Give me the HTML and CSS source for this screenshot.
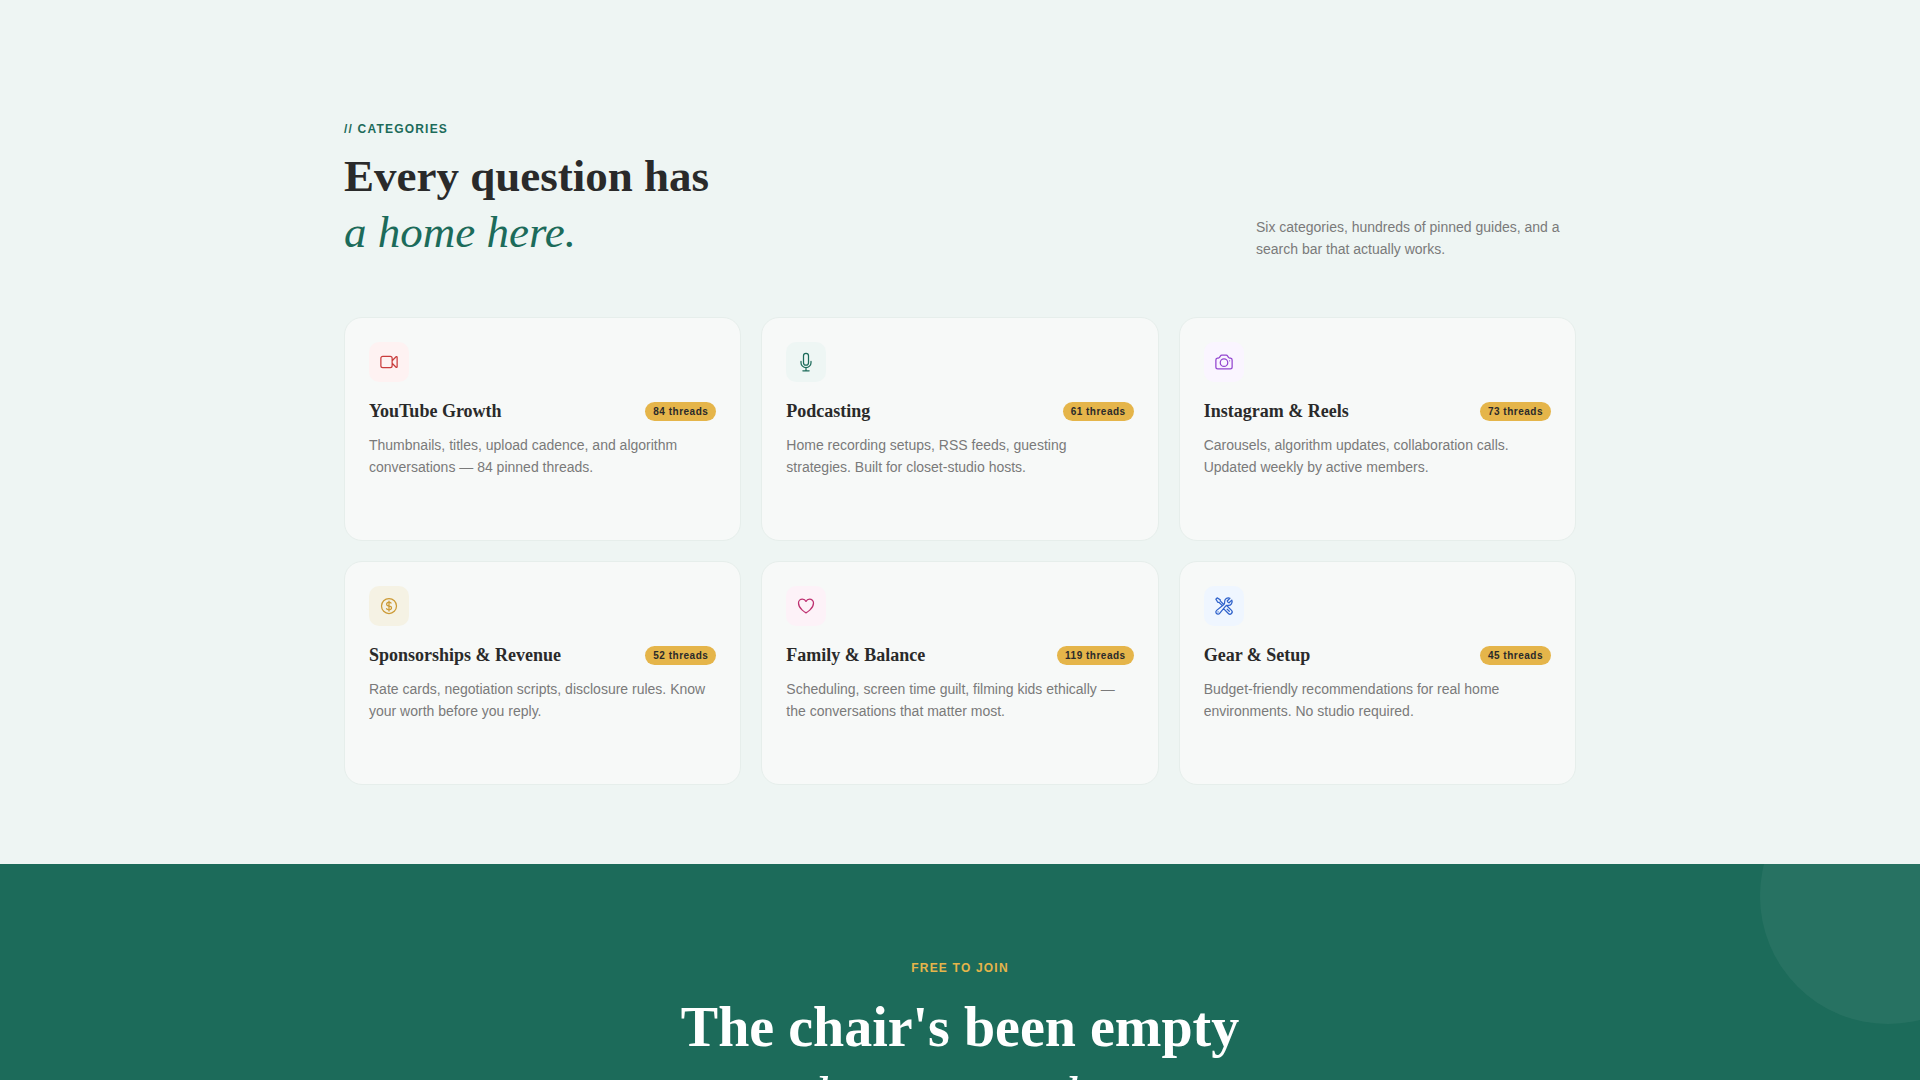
FILE: index.html
```
<!DOCTYPE html>
<html lang="en">
<head>
  <meta charset="UTF-8">
  <meta name="viewport" content="width=device-width, initial-scale=1.0">
  <title>Community Categories</title>
  <link rel="stylesheet" href="styles.css">
</head>
<body>
  <section class="categories">
    <div class="container">
      <div class="section-head">
        <div>
          <p class="eyebrow">// Categories</p>
          <h2>Every question has<br><em>a home here.</em></h2>
        </div>
        <p class="lede">Six categories, hundreds of pinned guides, and a search bar that actually works.</p>
      </div>

      <div class="grid">
        <article class="card">
          <div class="icon icon-red">
            <svg viewBox="0 0 24 24"><path d="m15.75 10.5 4.72-4.72a.75.75 0 0 1 1.28.53v11.38a.75.75 0 0 1-1.28.53l-4.72-4.72M4.5 18.75h9a2.25 2.25 0 0 0 2.25-2.25v-9a2.25 2.25 0 0 0-2.25-2.25h-9A2.25 2.25 0 0 0 2.25 7.5v9a2.25 2.25 0 0 0 2.25 2.25Z"/></svg>
          </div>
          <div class="card-title">
            <h3>YouTube Growth</h3>
            <span class="badge">84 threads</span>
          </div>
          <p>Thumbnails, titles, upload cadence, and algorithm conversations — 84 pinned threads.</p>
        </article>

        <article class="card">
          <div class="icon icon-green">
            <svg viewBox="0 0 24 24"><path d="M12 18.75a6 6 0 0 0 6-6v-1.5m-6 7.5a6 6 0 0 1-6-6v-1.5m6 7.5v3.75m-3.75 0h7.5M12 15.75a3 3 0 0 1-3-3V4.5a3 3 0 1 1 6 0v8.25a3 3 0 0 1-3 3Z"/></svg>
          </div>
          <div class="card-title">
            <h3>Podcasting</h3>
            <span class="badge">61 threads</span>
          </div>
          <p>Home recording setups, RSS feeds, guesting strategies. Built for closet-studio hosts.</p>
        </article>

        <article class="card">
          <div class="icon icon-purple">
            <svg viewBox="0 0 24 24"><path d="M6.827 6.175A2.31 2.31 0 0 1 5.186 7.23c-.38.054-.757.112-1.134.175C2.999 7.58 2.25 8.507 2.25 9.574V18a2.25 2.25 0 0 0 2.25 2.25h15A2.25 2.25 0 0 0 21.75 18V9.574c0-1.067-.75-1.994-1.802-2.169a47.865 47.865 0 0 0-1.134-.175 2.31 2.31 0 0 1-1.64-1.055l-.822-1.316a2.192 2.192 0 0 0-1.736-1.039 48.774 48.774 0 0 0-5.232 0 2.192 2.192 0 0 0-1.736 1.039l-.821 1.316Z"/><path d="M16.5 12.75a4.5 4.5 0 1 1-9 0 4.5 4.5 0 0 1 9 0ZM18.75 10.5h.008v.008h-.008V10.5Z"/></svg>
          </div>
          <div class="card-title">
            <h3>Instagram &amp; Reels</h3>
            <span class="badge">73 threads</span>
          </div>
          <p>Carousels, algorithm updates, collaboration calls. Updated weekly by active members.</p>
        </article>

        <article class="card">
          <div class="icon icon-gold">
            <svg viewBox="0 0 24 24"><path d="M12 6v12m-3-2.818.879.659c1.171.879 3.07.879 4.242 0 1.172-.879 1.172-2.303 0-3.182C13.536 12.219 12.768 12 12 12c-.725 0-1.45-.22-2.003-.659-1.106-.879-1.106-2.303 0-3.182s2.9-.879 4.006 0l.415.33M21 12a9 9 0 1 1-18 0 9 9 0 0 1 18 0Z"/></svg>
          </div>
          <div class="card-title">
            <h3>Sponsorships &amp; Revenue</h3>
            <span class="badge">52 threads</span>
          </div>
          <p>Rate cards, negotiation scripts, disclosure rules. Know your worth before you reply.</p>
        </article>

        <article class="card">
          <div class="icon icon-pink">
            <svg viewBox="0 0 24 24"><path d="M21 8.25c0-2.485-2.099-4.5-4.688-4.5-1.935 0-3.597 1.126-4.312 2.733-.715-1.607-2.377-2.733-4.313-2.733C5.1 3.75 3 5.765 3 8.25c0 7.22 9 12 9 12s9-4.78 9-12Z"/></svg>
          </div>
          <div class="card-title">
            <h3>Family &amp; Balance</h3>
            <span class="badge">119 threads</span>
          </div>
          <p>Scheduling, screen time guilt, filming kids ethically — the conversations that matter most.</p>
        </article>

        <article class="card">
          <div class="icon icon-blue">
            <svg viewBox="0 0 24 24"><path d="M11.42 15.17 17.25 21A2.652 2.652 0 0 0 21 17.25l-5.877-5.877M11.42 15.17l2.496-3.03c.317-.384.74-.626 1.208-.766M11.42 15.17l-4.655 5.653a2.548 2.548 0 1 1-3.586-3.586l6.837-5.63m5.108-.233c.55-.164 1.163-.188 1.743-.14a4.5 4.5 0 0 0 4.486-6.336l-3.276 3.277a3.004 3.004 0 0 1-2.25-2.25l3.276-3.276a4.5 4.5 0 0 0-6.336 4.486c.091 1.076-.071 2.264-.904 2.95l-.102.085m-1.745 1.437L5.909 7.5H4.5L2.25 3.75l1.5-1.5L7.5 4.5v1.409l4.26 4.26m-1.745 1.437 1.745-1.437m6.615 8.206L15.75 15.75M4.867 19.125h.008v.008h-.008v-.008Z"/></svg>
          </div>
          <div class="card-title">
            <h3>Gear &amp; Setup</h3>
            <span class="badge">45 threads</span>
          </div>
          <p>Budget-friendly recommendations for real home environments. No studio required.</p>
        </article>
      </div>
    </div>
  </section>

  <section class="cta">
    <div class="container">
      <p class="eyebrow">Free to join</p>
      <h2>The chair's been empty<br><em>long enough.</em></h2>
    </div>
  </section>
</body>
</html>
```
FILE: styles.css
```
* { box-sizing: border-box; margin: 0; padding: 0; }
body {
  font-family: "Liberation Sans", Arial, sans-serif;
  background-color: #eef5f3;
  color: #2a2a2a;
  overflow-x: hidden;
}
.container {
  max-width: 1280px;
  margin: 0 auto;
  padding: 0 24px;
}
.categories {
  padding: 120px 0 79px;
}
.section-head {
  display: flex;
  justify-content: space-between;
  align-items: flex-end;
  gap: 24px;
  margin-bottom: 57px;
}
.eyebrow {
  font-size: 12px;
  line-height: 18px;
  font-weight: 700;
  letter-spacing: 0.1em;
  text-transform: uppercase;
  color: #1c6b5a;
  margin-bottom: 10px;
}
h2 {
  font-family: "Liberation Serif", "Times New Roman", serif;
  font-size: 45px;
  line-height: 56px;
  font-weight: 700;
}
h2 em {
  font-weight: 400;
  color: #1c6b5a;
}
.lede {
  max-width: 320px;
  font-size: 14px;
  line-height: 22px;
  color: #7a7a7a;
}
.grid {
  display: grid;
  grid-template-columns: repeat(3, 1fr);
  gap: 20px;
}
.card {
  min-height: 224px;
  padding: 24px;
  background-color: #f7f9f8;
  border: 1px solid #e6eeeb;
  border-radius: 18px;
}
.icon {
  display: flex;
  align-items: center;
  justify-content: center;
  width: 40px;
  height: 40px;
  margin-bottom: 19px;
  border-radius: 10px;
}
.icon svg {
  width: 20px;
  height: 20px;
  fill: none;
  stroke: currentColor;
  stroke-width: 1.5;
  stroke-linecap: round;
  stroke-linejoin: round;
}
.icon-red { background-color: #fef2f2; color: #c93c3c; }
.icon-green { background-color: #eef6f4; color: #1c6b5a; }
.icon-purple { background-color: #faf5ff; color: #9345d0; }
.icon-gold { background-color: #f5f2e4; color: #cc9a35; }
.icon-pink { background-color: #fdf2f8; color: #be3070; }
.icon-blue { background-color: #eff6ff; color: #2f62cb; }
.card-title {
  display: flex;
  align-items: center;
  justify-content: space-between;
  margin-bottom: 12px;
}
h3 {
  font-family: "Liberation Serif", "Times New Roman", serif;
  font-size: 18px;
  line-height: 21px;
  font-weight: 700;
}
.badge {
  padding: 3px 8px;
  font-size: 10px;
  line-height: 13px;
  font-weight: 700;
  letter-spacing: 0.5px;
  background-color: #e5b54a;
  border-radius: 20px;
}
.card p {
  font-size: 14px;
  line-height: 22px;
  color: #7a7a7a;
}
.cta {
  position: relative;
  overflow: hidden;
  padding: 95px 0;
  background-color: #1c6b5a;
  color: white;
  text-align: center;
}
/* pale disc in the top right corner */
.cta::before {
  content: "";
  position: absolute;
  top: -96px;
  right: -96px;
  width: 256px;
  height: 256px;
  border-radius: 50%;
  background-color: rgba(255, 255, 255, 0.05);
}
.cta .eyebrow {
  color: #e5b54a;
  margin-bottom: 15px;
}
.cta h2 {
  font-size: 56px;
  line-height: 70px;
}
.cta h2 em {
  color: white;
}
@media (max-width: 900px) {
  .grid { grid-template-columns: 1fr; }
  .section-head { flex-direction: column; align-items: flex-start; }
  .cta h2 { font-size: 45px; line-height: 56px; }
}
```
